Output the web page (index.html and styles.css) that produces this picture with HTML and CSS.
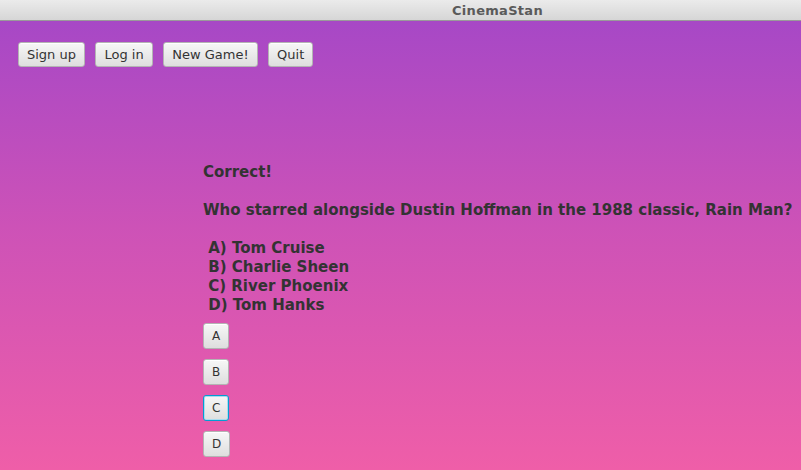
FILE: index.html
```html
<!DOCTYPE html>
<html>
<head>
<meta charset="utf-8">
<title>CinemaStan</title>
<link rel="stylesheet" href="styles.css">
</head>
<body>
<div class="titlebar"><span class="title">CinemaStan</span></div>
<main class="stage">
  <nav class="toolbar">
    <button class="btn">Sign up</button>
    <button class="btn">Log in</button>
    <button class="btn">New Game!</button>
    <button class="btn">Quit</button>
  </nav>
  <section class="quiz">
    <pre class="message">Correct!

Who starred alongside Dustin Hoffman in the 1988 classic, Rain Man?

 A) Tom Cruise
 B) Charlie Sheen
 C) River Phoenix
 D) Tom Hanks</pre>
    <div class="answers">
      <button class="btn answer">A</button>
      <button class="btn answer">B</button>
      <button class="btn answer focused">C</button>
      <button class="btn answer">D</button>
    </div>
  </section>
</main>
</body>
</html>
```
FILE: styles.css
```css
html, body {
  margin: 0;
  padding: 0;
  height: 100%;
  overflow: hidden;
}
body {
  font-family: "DejaVu Sans", sans-serif;
  color: #333333;
  display: flex;
  flex-direction: column;
}
.titlebar {
  height: 20px;
  flex: 0 0 20px;
  background: linear-gradient(#ebebeb, #d6d6d6);
  border-bottom: 1px solid #9a9a9a;
  display: flex;
  align-items: center;
  padding-left: 452px;
}
.title {
  font-weight: bold;
  font-size: 13px;
  color: #5a5a5a;
  letter-spacing: 0.3px;
}
.stage {
  flex: 1;
  background: linear-gradient(#a748c6, #cd52b7 46%, #ef5ea8);
  padding: 21px 0 0 18px;
}
.toolbar {
  display: flex;
  gap: 10.5px;
}
.btn {
  font-family: "DejaVu Sans", sans-serif;
  font-size: 13px;
  color: #333333;
  height: 25px;
  padding: 0 8px;
  border: 1px solid #b4b4b4;
  border-radius: 3px;
  background: linear-gradient(#f7f7f7, #dedede);
  box-shadow: inset 0 1px 0 #ffffff;
  line-height: 23px;
  margin: 0;
}
.quiz {
  margin: 96px 0 0 185px;
}
.message {
  margin: 0;
  font-family: "DejaVu Sans", sans-serif;
  font-weight: bold;
  font-size: 15px;
  line-height: 19px;
  color: #333333;
  white-space: pre;
}
.answers {
  margin-top: 8px;
  display: flex;
  flex-direction: column;
  align-items: flex-start;
  gap: 10px;
}
.answer {
  height: 26px;
  padding: 0 8px;
  font-size: 12px;
}
.answer.focused {
  border-color: #039ed3;
  box-shadow: inset 0 0 0 1px #a8dcef;
}
```
